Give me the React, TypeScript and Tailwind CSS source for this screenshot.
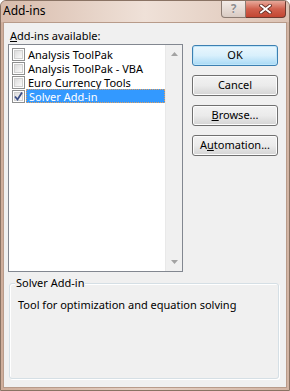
import React from "react";

const font = { fontFamily: '"Noto Sans", "Open Sans", sans-serif' };

function CheckBox({ checked }: { checked?: boolean }) {
  return (
    <div className="relative w-[13px] h-[13px] border border-[#8e8f8f] bg-white shrink-0">
      <div className="absolute inset-[1px] bg-gradient-to-br from-[#dcdcdc] to-[#fbfbfb] border border-[#d0d0d0]" />
      {checked && (
        <svg className="absolute inset-0" width="11" height="11" viewBox="0 0 11 11">
          <path d="M2 5.5 L4.5 8.5 L9 1.5" fill="none" stroke="#3c4f87" strokeWidth="1.8" />
        </svg>
      )}
    </div>
  );
}

function Btn({ children, primary }: { children: React.ReactNode; primary?: boolean }) {
  return (
    <div
      className={
        "w-[86px] h-[21px] rounded-[3px] border flex items-center justify-center text-[11px] text-black " +
        (primary
          ? "border-[#3c7fb1] bg-gradient-to-b from-[#eaf6fd] via-[#d9f0fc] to-[#a7d9f5] shadow-[inset_0_0_0_1px_#bfe6fa]"
          : "border-[#707070] bg-gradient-to-b from-[#f2f2f2] via-[#ebebeb] to-[#d4d4d4] shadow-[inset_0_0_0_1px_#fcfcfc]")
      }
    >
      {children}
    </div>
  );
}

const items = ["Analysis ToolPak", "Analysis ToolPak - VBA", "Euro Currency Tools", "Solver Add-in"];

export default function App() {
  return (
    <div
      className="w-[290px] h-[391px] flex flex-col bg-gradient-to-r from-[#cfae9b] via-[#e6d2c6] to-[#d2b4a3] border border-[#8a7364] rounded-t-[6px] overflow-hidden"
      style={font}
    >
      <div className="h-[21px] flex items-start justify-between shrink-0 bg-gradient-to-r from-[#d8bcac] via-[#efe1d8] to-[#dcc3b4]">
        <div className="pl-[2px] pt-[3px] text-[12px] leading-[14px] text-black">Add-ins</div>
        <div className="flex mr-[3px]">
          <div className="w-[25px] h-[17px] border border-[#8b7b72] border-t-0 rounded-bl-[4px] bg-gradient-to-b from-[#f3ece8] to-[#d9cbc3] flex items-center justify-center">
            <span className="text-[12px] leading-none font-bold text-[#8f8f8f]" style={{ textShadow: "0 0 1px #fff" }}>?</span>
          </div>
          <div className="w-[40px] h-[17px] border border-[#6e3a30] border-t-0 border-l-0 rounded-br-[4px] bg-gradient-to-b from-[#e7a99b] via-[#d0604d] to-[#c24632] flex items-center justify-center">
            <svg width="13" height="10" viewBox="0 0 13 10">
              <path d="M2 1.5 L11 8.5 M11 1.5 L2 8.5" stroke="#6a3228" strokeWidth="3.6" strokeLinecap="square" />
              <path d="M2 1.5 L11 8.5 M11 1.5 L2 8.5" stroke="#ffffff" strokeWidth="1.8" strokeLinecap="square" />
            </svg>
          </div>
        </div>
      </div>
      <div className="flex-1 mx-[2px] mb-[2px] bg-[#f0f0f0] border border-[#b89b8a] flex flex-col text-[11px] text-black">
        <div className="flex">
          <div className="ml-[4px] flex flex-col">
            <div className="ml-[2px] mt-[5px] h-[16px] leading-[16px]">
              <span className="underline">A</span>dd-ins available:
            </div>
            <div className="w-[175px] h-[228px] border border-[#828790] bg-white flex">
              <div className="flex-1 pt-[2px] pl-[3px] flex flex-col">
                {items.map((t, i) => (
                  <div key={t} className="h-[14px] flex items-center">
                    <CheckBox checked={i === 3} />
                    <div
                      className={
                        "ml-[1px] h-[14px] flex-1 flex items-center pl-[2px] leading-[13px] whitespace-nowrap " +
                        (i === 3 ? "bg-[#3399ff] text-white border border-dotted border-[#e0a060] pl-[1px]" : "")
                      }
                    >
                      {t}
                    </div>
                  </div>
                ))}
              </div>
              <div className="w-[17px] bg-[#f0f0f0] border-l border-[#e9e9e9] flex flex-col justify-between items-center py-[7px]">
                <svg width="7" height="4" viewBox="0 0 7 4"><path d="M0 4 L3.5 0 L7 4 Z" fill="#a3a3a3" /></svg>
                <svg width="7" height="4" viewBox="0 0 7 4"><path d="M0 0 L3.5 4 L7 0 Z" fill="#a3a3a3" /></svg>
              </div>
            </div>
          </div>
          <div className="ml-[9px] mt-[22px] flex flex-col gap-[9px]">
            <Btn primary>OK</Btn>
            <Btn>Cancel</Btn>
            <Btn><span><span className="underline">B</span>rowse...</span></Btn>
            <Btn><span>A<span className="underline">u</span>tomation...</span></Btn>
          </div>
        </div>
        <div className="relative ml-[5px] mt-[11px] w-[270px] h-[96px] border border-[#d5dfe5] rounded-[3px] shadow-[inset_1px_1px_0_#ffffff,1px_1px_0_#ffffff]">
          <div className="absolute left-[5px] top-[-8px] px-[1px] bg-[#f0f0f0] leading-[14px]">Solver Add-in</div>
          <div className="pl-[8px] pt-[14px] leading-[14px]">Tool for optimization and equation solving</div>
        </div>
      </div>
    </div>
  );
}
